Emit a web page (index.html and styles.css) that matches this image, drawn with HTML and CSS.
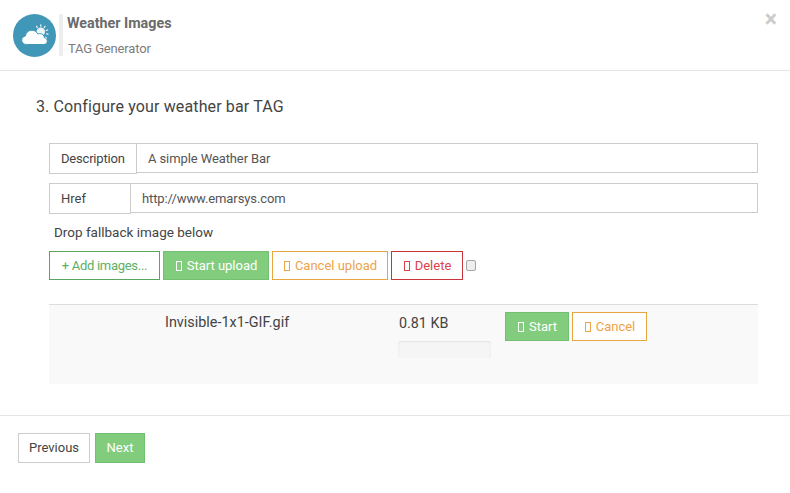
FILE: index.html
```html
<!DOCTYPE html>
<html lang="en">
<head>
<meta charset="utf-8">
<title>Weather Images</title>
<link rel="stylesheet" href="styles.css">
</head>
<body>
<div class="modal">
  <header class="head">
    <div class="logo">
      <svg width="43" height="43" viewBox="0 0 43 43">
        <circle cx="21.5" cy="21.5" r="21.5" fill="#4097b8"/>
        <g stroke="#fff" stroke-width="1.3" stroke-linecap="round" fill="none" opacity=".9">
          <path d="M23.600 12.400l.7 1.100M27.800 10.800v1.400M32 12.400l-.7 1.100M34.600 16l-1.300.5M35 20.200l-1.400-.3M33.400 24l-1.100-.8"/>
        </g>
        <circle cx="27.800" cy="17.800" r="4.200" fill="#fff" opacity=".9"/>
        <path d="M13.500 30.500c-2.800 0-4.800-1.900-4.800-4.300 0-2.200 1.600-3.900 3.700-4.200.5-3.400 3.100-5.800 6.300-5.800 2.800 0 5 1.500 6.100 3.800.6-.3 1.300-.4 2-.4 2.500 0 4.400 1.800 4.600 4.100 1.600.3 2.900 1.600 2.900 3.300 0 2-1.500 3.500-3.500 3.500z" fill="#fff" stroke="#4097b8" stroke-width="1"/>
      </svg>
    </div>
    <div class="titles">
      <div class="title">Weather Images</div>
      <div class="subtitle">TAG Generator</div>
    </div>
    <div class="close">×</div>
  </header>
  <main class="body">
    <h2 class="step">3. Configure your weather bar TAG</h2>
    <div class="group">
      <span class="addon desc">Description</span>
      <span class="field">A simple Weather Bar</span>
    </div>
    <div class="group">
      <span class="addon href">Href</span>
      <span class="field">http://www.emarsys.com</span>
    </div>
    <p class="drop">Drop fallback image below</p>
    <div class="actions">
      <span class="btn add">+ Add images...</span>
      <span class="btn solid"><i class="tofu"></i>Start upload</span>
      <span class="btn warn"><i class="tofu"></i>Cancel upload</span>
      <span class="btn danger"><i class="tofu"></i>Delete</span>
      <span class="check"></span>
    </div>
    <div class="file">
      <div class="name">Invisible-1x1-GIF.gif</div>
      <div class="size">
        <div>0.81 KB</div>
        <div class="progress"></div>
      </div>
      <div class="file-actions">
        <span class="btn solid small"><i class="tofu"></i>Start</span>
        <span class="btn warn small"><i class="tofu"></i>Cancel</span>
      </div>
    </div>
  </main>
  <footer class="foot">
    <span class="btn prev">Previous</span>
    <span class="btn solid next">Next</span>
  </footer>
</div>
</body>
</html>
```
FILE: styles.css
```css
* { box-sizing: border-box; }
html, body { margin: 0; height: 100%; background: #fff; }
body { font-family: Roboto, "Liberation Sans", sans-serif; font-size: 13px; color: #444; overflow: hidden; }
.modal { width: 790px; }
.head { height: 71px; border-bottom: 1px solid #e5e5e5; padding: 14px 13px 0; display: flex; align-items: flex-start; }
.logo { width: 43px; height: 43px; }
.logo svg { display: block; }
.titles { margin-left: 3px; border-left: 4px solid #eee; height: 42px; padding-left: 4px; }
.title { font-size: 14.300px; font-weight: 700; color: #6b6b6b; line-height: 18px; }
.subtitle { font-size: 13px; letter-spacing: -.15px; color: #7d7d7d; line-height: 16px; margin-top: 9px; margin-left: 1px; }
.close { margin-left: auto; margin-top: -2px; font-size: 23px; line-height: 16px; font-weight: 700; color: #ccc; }
.body { height: 344px; padding: 26px 32px 0 49px; }
.step { margin: 0 0 27px -13px; font-size: 16px; font-weight: 400; line-height: 19px; color: #444; letter-spacing: .13px; }
.group { display: flex; align-items: flex-start; margin-bottom: 9px; height: 31px; }
.addon { height: 31px; border: 1px solid #ccc; padding: 0 0 0 11px; line-height: 29px; color: #444; }
.desc { width: 88px; letter-spacing: -.2px; }
.href { width: 82px; }
.field { flex: 1; height: 30px; margin-left: -1px; border: 1px solid #ccc; padding: 1px 11px 0; line-height: 28px; color: #555; letter-spacing: -.1px; }
.drop { margin: 0 0 10px 5px; font-size: 13.500px; line-height: 18px; color: #444; }
.actions { display: flex; align-items: center; gap: 3px; }
.btn { display: inline-flex; align-items: center; justify-content: center; height: 29px; border: 1px solid; background: #fff; font-size: 13px; }
.add { width: 111px; border-color: #5aa55f; color: #5cb063; letter-spacing: -.3px; }
.solid { background: #82cc7e; border-color: #74c071; color: #fff; }
.actions .solid { width: 106px; }
.warn { border-color: #e9a63f; color: #eea24a; }
.actions .warn { width: 116px; }
.danger { width: 72px; border-color: #c9333a; color: #d9434a; }
.tofu { display: inline-block; width: 6px; height: 10px; border: 1px solid currentColor; margin: 0 5px 0 1px; }
.check { width: 10px; height: 11px; border: 1px solid #a5a5a5; border-radius: 2px; background: #eee; }
.file { margin-top: 24px; height: 80px; border-top: 1px solid #ddd; background: #f9f9f9; display: grid; grid-template-columns: 349px 107px auto; padding-top: 7px; }
.name { padding: 1px 0 0 116px; font-size: 14.400px; line-height: 20px; color: #444; }
.size { padding: 1px 0 0 1px; font-size: 14.300px; line-height: 20px; color: #444; }
.progress { width: 93px; height: 17px; margin: 8px 0 0 -1px; background: #f5f5f5; border-radius: 3px; box-shadow: inset 0 1px 2px rgba(0,0,0,.08); }
.file-actions { display: flex; gap: 3px; align-items: flex-start; }
.small.solid { width: 64px; }
.small.warn { width: 75px; }
.foot { border-top: 1px solid #e5e5e5; padding: 17px 18px 0; display: flex; gap: 5px; }
.foot .btn { height: 30px; padding-bottom: 2px; }
.prev { width: 72px; border-color: #ccc; color: #444; }
.next { width: 50px; }
```
